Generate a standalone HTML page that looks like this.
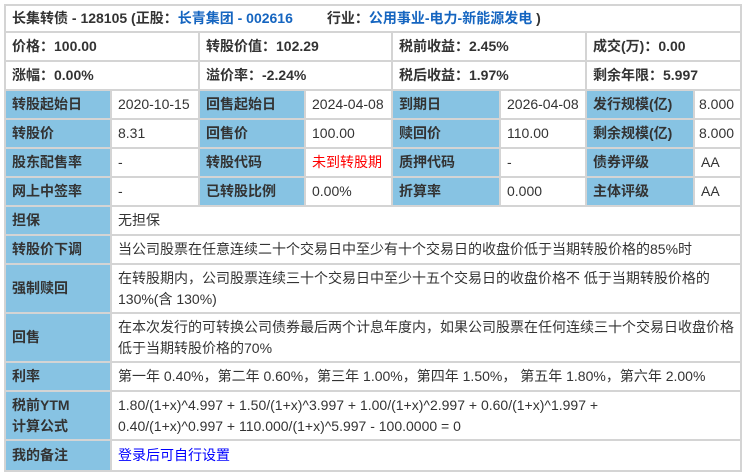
<!DOCTYPE html>
<html><head><meta charset="utf-8"><style>
body{margin:0;width:743px;height:474px;background:#fff;position:relative;overflow:hidden;font-family:"Liberation Sans","Noto Sans CJK SC",sans-serif;font-size:14px;color:#333}
.c{position:absolute;box-sizing:border-box;border-right:2px solid #d4d4d4;border-bottom:2px solid #d4d4d4;padding-left:6px;display:flex;align-items:center;line-height:21px;white-space:nowrap;overflow:hidden}
.l{background:#87c3e3;font-weight:bold;color:#333}
.b{font-weight:bold}
a{color:#1565c0;text-decoration:none}
.u{color:#00f}
#frame{position:absolute;left:4px;top:4px;width:738px;height:468px;border-left:2px solid #d4d4d4;border-top:2px solid #d4d4d4;box-sizing:border-box}
</style></head><body>
<div id="frame"></div>
<div class="c b" style="left:6px;top:6px;width:736px;height:27px">长集转债 - 128105 (正股：<a>长青集团 - 002616</a><span style="display:inline-block;width:34px"></span>行业：<a>公用事业-电力-新能源发电</a>&nbsp;)</div>

<div class="c b" style="left:6px;top:33px;width:194px;height:29px">价格：100.00</div>
<div class="c b" style="left:200px;top:33px;width:193px;height:29px">转股价值：102.29</div>
<div class="c b" style="left:393px;top:33px;width:194px;height:29px">税前收益：2.45%</div>
<div class="c b" style="left:587px;top:33px;width:155px;height:29px">成交(万)：0.00</div>
<div class="c b" style="left:6px;top:62px;width:194px;height:29px">涨幅：0.00%</div>
<div class="c b" style="left:200px;top:62px;width:193px;height:29px">溢价率：-2.24%</div>
<div class="c b" style="left:393px;top:62px;width:194px;height:29px">税后收益：1.97%</div>
<div class="c b" style="left:587px;top:62px;width:155px;height:29px">剩余年限：5.997</div>

<div class="c l" style="left:6px;top:91px;width:106px;height:29px">转股起始日</div>
<div class="c" style="left:112px;top:91px;width:88px;height:29px">2020-10-15</div>
<div class="c l" style="left:200px;top:91px;width:106px;height:29px">回售起始日</div>
<div class="c" style="left:306px;top:91px;width:87px;height:29px">2024-04-08</div>
<div class="c l" style="left:393px;top:91px;width:108px;height:29px">到期日</div>
<div class="c" style="left:501px;top:91px;width:86px;height:29px">2026-04-08</div>
<div class="c l" style="left:587px;top:91px;width:108px;height:29px">发行规模(亿)</div>
<div class="c" style="left:695px;top:91px;width:47px;height:29px;padding-left:4px">8.000</div>

<div class="c l" style="left:6px;top:120px;width:106px;height:29px">转股价</div>
<div class="c" style="left:112px;top:120px;width:88px;height:29px">8.31</div>
<div class="c l" style="left:200px;top:120px;width:106px;height:29px">回售价</div>
<div class="c" style="left:306px;top:120px;width:87px;height:29px">100.00</div>
<div class="c l" style="left:393px;top:120px;width:108px;height:29px">赎回价</div>
<div class="c" style="left:501px;top:120px;width:86px;height:29px">110.00</div>
<div class="c l" style="left:587px;top:120px;width:108px;height:29px">剩余规模(亿)</div>
<div class="c" style="left:695px;top:120px;width:47px;height:29px;padding-left:4px">8.000</div>

<div class="c l" style="left:6px;top:149px;width:106px;height:29px">股东配售率</div>
<div class="c" style="left:112px;top:149px;width:88px;height:29px">-</div>
<div class="c l" style="left:200px;top:149px;width:106px;height:29px">转股代码</div>
<div class="c" style="left:306px;top:149px;width:87px;height:29px;color:#f00">未到转股期</div>
<div class="c l" style="left:393px;top:149px;width:108px;height:29px">质押代码</div>
<div class="c" style="left:501px;top:149px;width:86px;height:29px">-</div>
<div class="c l" style="left:587px;top:149px;width:108px;height:29px">债券评级</div>
<div class="c" style="left:695px;top:149px;width:47px;height:29px">AA</div>

<div class="c l" style="left:6px;top:178px;width:106px;height:29px">网上中签率</div>
<div class="c" style="left:112px;top:178px;width:88px;height:29px">-</div>
<div class="c l" style="left:200px;top:178px;width:106px;height:29px">已转股比例</div>
<div class="c" style="left:306px;top:178px;width:87px;height:29px">0.00%</div>
<div class="c l" style="left:393px;top:178px;width:108px;height:29px">折算率</div>
<div class="c" style="left:501px;top:178px;width:86px;height:29px">0.000</div>
<div class="c l" style="left:587px;top:178px;width:108px;height:29px">主体评级</div>
<div class="c" style="left:695px;top:178px;width:47px;height:29px">AA</div>

<div class="c l" style="left:6px;top:207px;width:106px;height:29px">担保</div>
<div class="c" style="left:112px;top:207px;width:630px;height:29px">无担保</div>
<div class="c l" style="left:6px;top:236px;width:106px;height:29px">转股价下调</div>
<div class="c" style="left:112px;top:236px;width:630px;height:29px">当公司股票在任意连续二十个交易日中至少有十个交易日的收盘价低于当期转股价格的85%时</div>
<div class="c l" style="left:6px;top:265px;width:106px;height:49px">强制赎回</div>
<div class="c" style="left:112px;top:265px;width:630px;height:49px">在转股期内，公司股票连续三十个交易日中至少十五个交易日的收盘价格不 低于当期转股价格的<br>130%(含 130%)</div>
<div class="c l" style="left:6px;top:314px;width:106px;height:49px">回售</div>
<div class="c" style="left:112px;top:314px;width:630px;height:49px">在本次发行的可转换公司债券最后两个计息年度内，如果公司股票在任何连续三十个交易日收盘价格<br>低于当期转股价格的70%</div>
<div class="c l" style="left:6px;top:363px;width:106px;height:29px">利率</div>
<div class="c" style="left:112px;top:363px;width:630px;height:29px">第一年 0.40%，第二年 0.60%，第三年 1.00%，第四年 1.50%， 第五年 1.80%，第六年 2.00%</div>
<div class="c l" style="left:6px;top:392px;width:106px;height:49px">税前YTM<br>计算公式</div>
<div class="c" style="left:112px;top:392px;width:630px;height:49px">1.80/(1+x)^4.997 + 1.50/(1+x)^3.997 + 1.00/(1+x)^2.997 + 0.60/(1+x)^1.997 +<br>0.40/(1+x)^0.997 + 110.000/(1+x)^5.997 - 100.0000 = 0</div>
<div class="c l" style="left:6px;top:441px;width:106px;height:31px">我的备注</div>
<div class="c" style="left:112px;top:441px;width:630px;height:31px"><span class="u">登录后可自行设置</span></div>
</body></html>
